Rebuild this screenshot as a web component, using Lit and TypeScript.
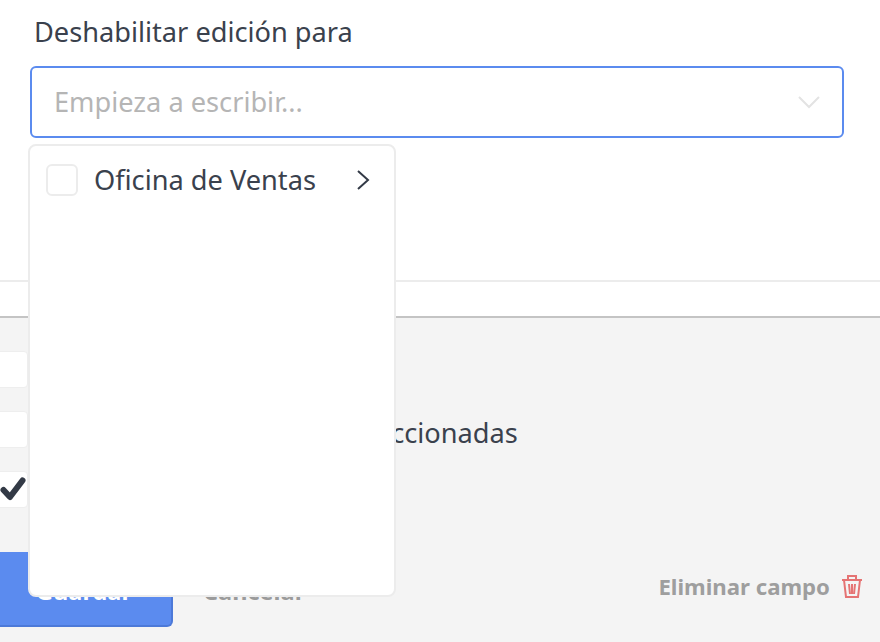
import { LitElement, html, css } from "lit";
import { customElement } from "lit/decorators.js";

@customElement("app-root")
export class AppRoot extends LitElement {
  static styles = css`
    :host {
      display: block;
      position: relative;
      width: 880px;
      height: 642px;
      overflow: hidden;
      background: #fff;
      font-family: "Noto Sans", "Open Sans", sans-serif;
      color: #3a414d;
    }
    .top {
      box-sizing: border-box;
      height: 282px;
      padding: 15px 36px 0 30px;
      border-bottom: 2px solid #ececec;
    }
    .label {
      font-size: 27.2px;
      line-height: 34px;
      margin-left: 4px;
      margin-bottom: 17px;
    }
    .select {
      box-sizing: border-box;
      height: 72px;
      border: 2px solid #5b8bef;
      border-radius: 6px;
      display: flex;
      align-items: center;
      justify-content: space-between;
      padding: 0 22px 2px 22px;
      font-size: 27.2px;
      color: #b5b5b5;
    }
    .select svg { display: block; margin-top: 2px; }
    .gap { height: 34px; }
    .footer {
      box-sizing: border-box;
      height: 326px;
      background: #f4f4f4;
      border-top: 2px solid #c4c4c4;
      padding-top: 33px;
      position: relative;
    }
    .rows {
      display: flex;
      flex-direction: column;
      gap: 23px;
    }
    .row {
      display: flex;
      align-items: center;
      gap: 102px;
      height: 37px;
      margin-left: -12px;
      font-size: 27.2px;
      white-space: nowrap;
    }
    .row span { padding-top: 6px; }
    .box {
      box-sizing: border-box;
      flex: none;
      width: 40px;
      height: 37px;
      background: #fff;
      border: 1px solid #eeeeee;
      border-radius: 4px;
      display: flex;
      align-items: center;
      justify-content: flex-end;
      padding-right: 1px;
    }
    .box svg { margin-top: -2px; }
    .actions {
      display: flex;
      align-items: flex-start;
      margin-top: 44px;
    }
    .save {
      box-sizing: border-box;
      width: 190px;
      height: 75px;
      margin-left: -17px;
      background: #5b8bef;
      border: none;
      border-bottom: 2px solid #4c79d8;
      border-right: 2px solid #4c79d8;
      border-radius: 6px;
      color: #fff;
      font: 700 23.5px "Noto Sans", sans-serif;
      padding: 5px 0 0 14px;
      text-align: center;
    }
    .cancel {
      margin-left: 30px;
      margin-top: 23px;
      color: #9b9b9b;
      font-weight: 700;
      font-size: 23.5px;
    }
    .delete {
      margin-left: auto;
      margin-right: 17px;
      margin-top: 19px;
      display: flex;
      align-items: center;
      gap: 11px;
      color: #9e9e9e;
      font-weight: 700;
      font-size: 22.2px;
    }
    .delete svg { margin-top: -1px; }
    .menu {
      position: absolute;
      box-sizing: border-box;
      left: 28px;
      top: 144px;
      width: 368px;
      height: 453px;
      background: #fff;
      border: 2px solid #ececec;
      border-radius: 8px;
    }
    .item {
      display: flex;
      align-items: center;
      height: 68px;
      padding: 0 24px 0 16px;
      font-size: 27.2px;
    }
    .check {
      box-sizing: border-box;
      width: 32px;
      height: 32px;
      border: 2px solid #ececec;
      border-radius: 6px;
      margin-right: 16px;
    }
    .item span { flex: 1; margin-top: -2px; }
  `;

  render() {
    return html`
      <div class="top">
        <div class="label">Deshabilitar edición para</div>
        <div class="select">
          <span>Empieza a escribir...</span>
          <svg width="22" height="14" viewBox="0 0 22 14" fill="none" stroke="#e3e3e3" stroke-width="2">
            <path d="M1 2l10 10L21 2" />
          </svg>
        </div>
      </div>
      <div class="gap"></div>
      <div class="footer">
        <div class="rows">
          <div class="row"><div class="box"></div></div>
          <div class="row">
            <div class="box"></div>
            <span>Mostrar solo las seleccionadas</span>
          </div>
          <div class="row">
            <div class="box">
              <svg width="26" height="24" viewBox="0 0 26 24" fill="none" stroke="#333a46" stroke-width="6" stroke-linecap="round" stroke-linejoin="round">
                <path d="M3.5 13l6.5 7L22.5 3.5" />
              </svg>
            </div>
          </div>
        </div>
        <div class="actions">
          <button class="save">Guardar</button>
          <span class="cancel">Cancelar</span>
          <div class="delete">
            <span>Eliminar campo</span>
            <svg width="22" height="25" viewBox="0 0 22 25" fill="none" stroke="#e57373" stroke-width="2">
              <path d="M1 6h20M7 5V2h8v3M3 6l2 17h12l2-17M8 10l1 10M11 10v10M14 10l-1 10" />
            </svg>
          </div>
        </div>
      </div>
      <div class="menu">
        <div class="item">
          <div class="check"></div>
          <span>Oficina de Ventas</span>
          <svg width="14" height="22" viewBox="0 0 14 22" fill="none" stroke="#333a46" stroke-width="2">
            <path d="M2 2l10 9L2 20" />
          </svg>
        </div>
      </div>
    `;
  }
}
